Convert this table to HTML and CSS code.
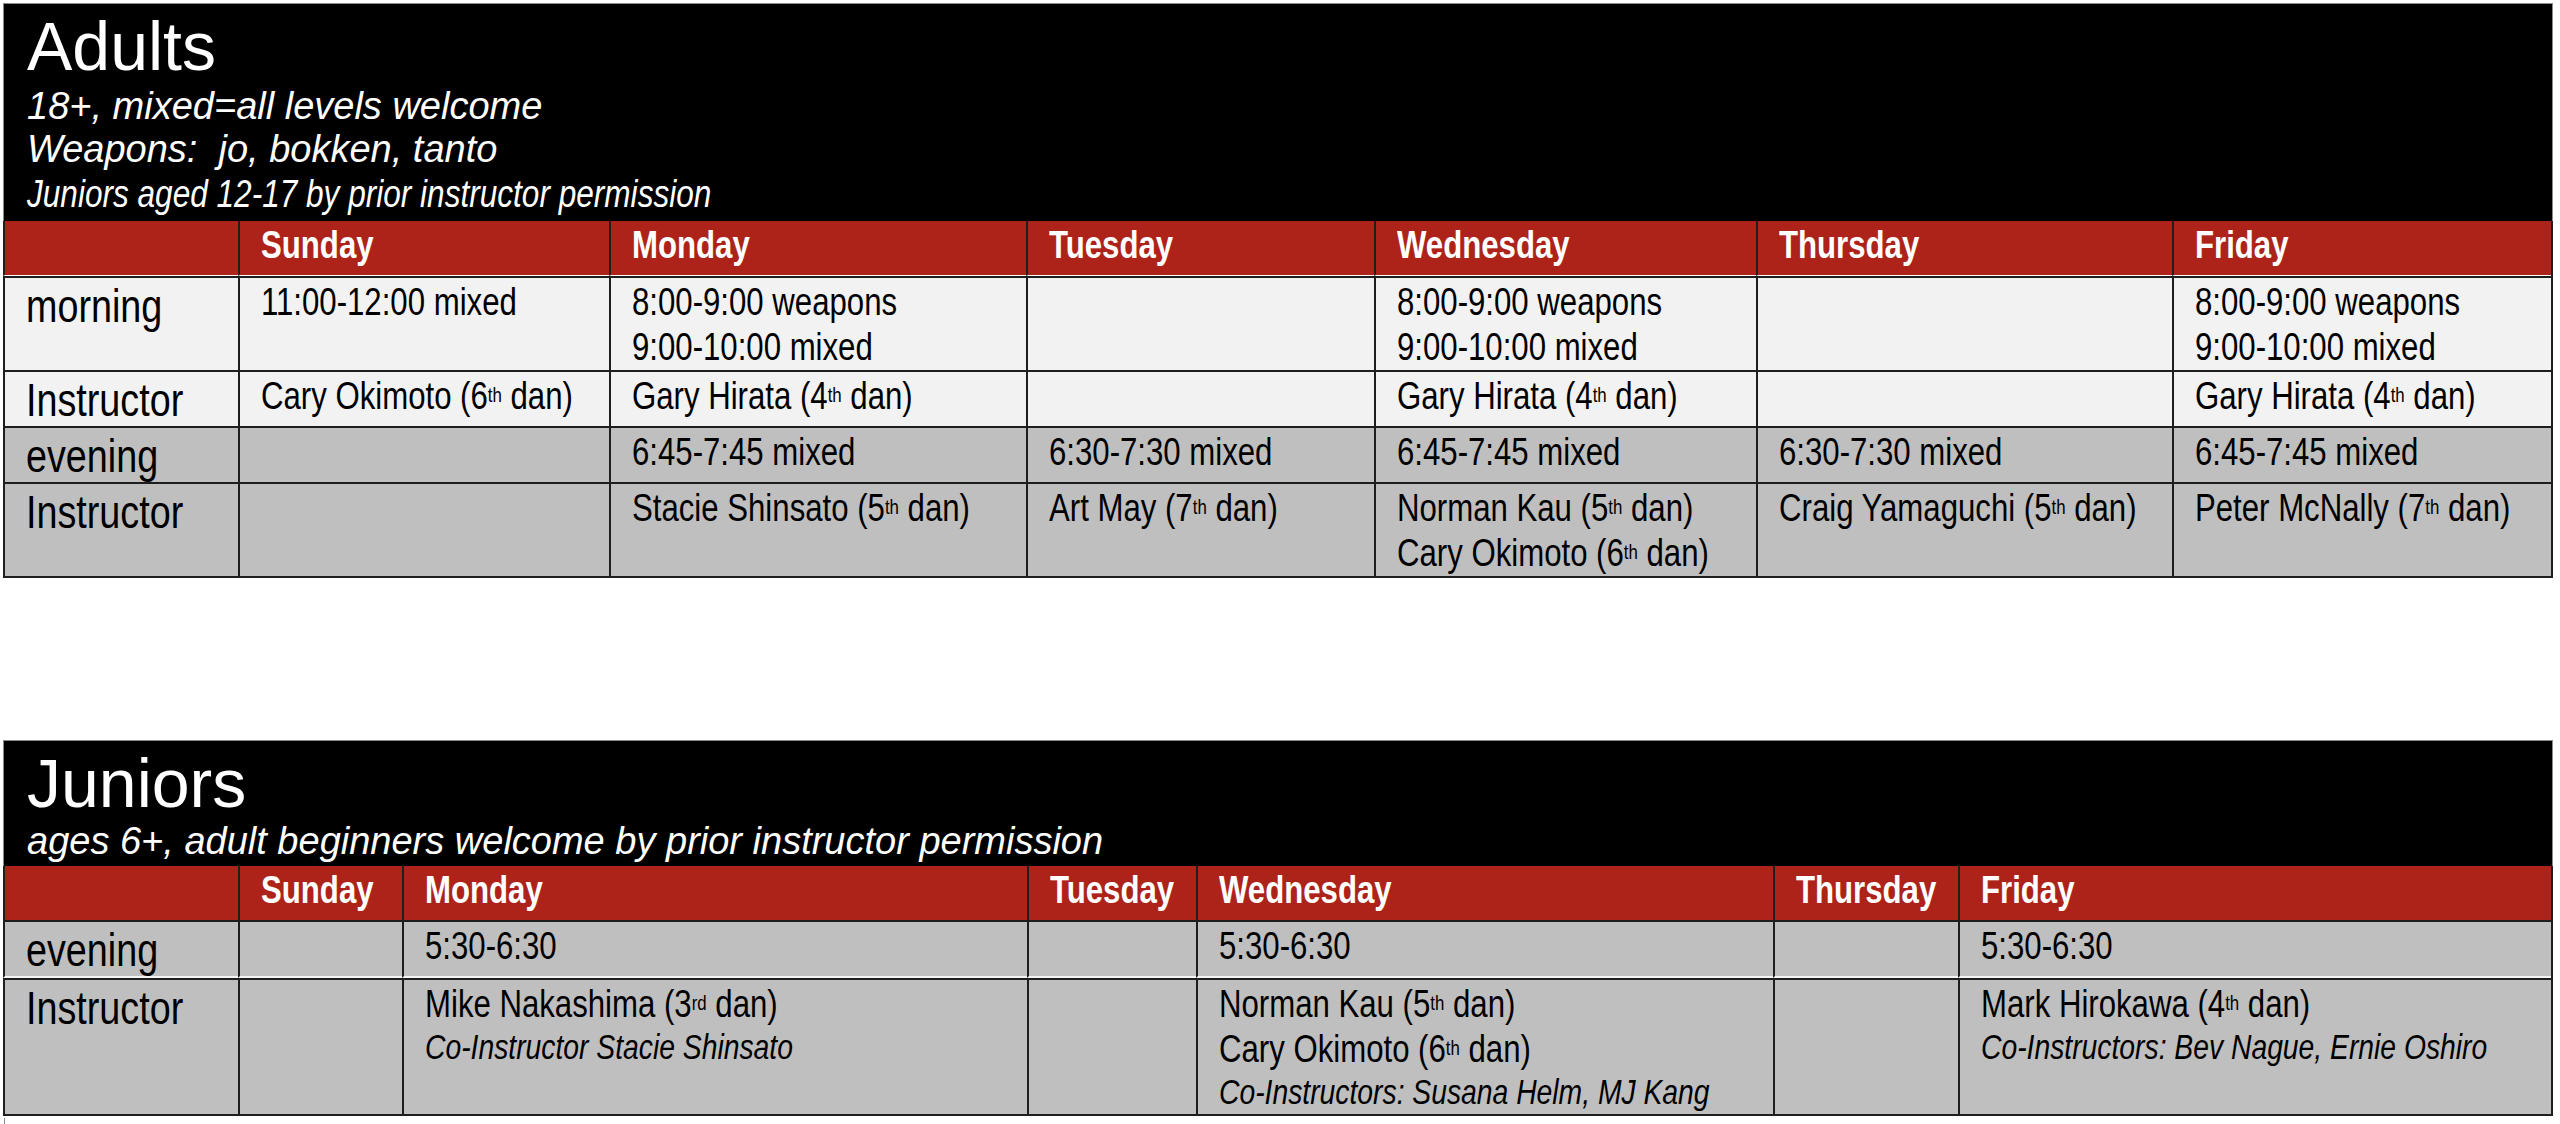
FILE: index.html
```html
<!DOCTYPE html>
<html lang="en">
<head>
<meta charset="utf-8">
<title>Class Schedule</title>
<link rel="stylesheet" href="styles.css">
</head>
<body>
<div class="page">

  <section class="sched adults">
    <header class="banner">
      <h1 class="title">Adults</h1>
      <p class="sub">18+, mixed=all levels welcome</p>
      <p class="sub">Weapons:&nbsp; jo, bokken, tanto</p>
      <p class="sub narrow"><span class="t">Juniors aged 12-17 by prior instructor permission</span></p>
    </header>
    <div class="grid cols-adults">
      <div class="row head">
        <div class="cell"></div>
        <div class="cell"><span class="t">Sunday</span></div>
        <div class="cell"><span class="t">Monday</span></div>
        <div class="cell"><span class="t">Tuesday</span></div>
        <div class="cell"><span class="t">Wednesday</span></div>
        <div class="cell"><span class="t">Thursday</span></div>
        <div class="cell"><span class="t">Friday</span></div>
      </div>
      <div class="row light">
        <div class="cell label"><span class="t">morning</span></div>
        <div class="cell"><span class="t">11:00-12:00 mixed</span></div>
        <div class="cell"><span class="t">8:00-9:00 weapons<br>9:00-10:00 mixed</span></div>
        <div class="cell"></div>
        <div class="cell"><span class="t">8:00-9:00 weapons<br>9:00-10:00 mixed</span></div>
        <div class="cell"></div>
        <div class="cell"><span class="t">8:00-9:00 weapons<br>9:00-10:00 mixed</span></div>
      </div>
      <div class="row light">
        <div class="cell label"><span class="t">Instructor</span></div>
        <div class="cell"><span class="t">Cary Okimoto (6<sup>th</sup> dan)</span></div>
        <div class="cell"><span class="t">Gary Hirata (4<sup>th</sup> dan)</span></div>
        <div class="cell"></div>
        <div class="cell"><span class="t">Gary Hirata (4<sup>th</sup> dan)</span></div>
        <div class="cell"></div>
        <div class="cell"><span class="t">Gary Hirata (4<sup>th</sup> dan)</span></div>
      </div>
      <div class="row dark">
        <div class="cell label"><span class="t">evening</span></div>
        <div class="cell"></div>
        <div class="cell"><span class="t">6:45-7:45 mixed</span></div>
        <div class="cell"><span class="t">6:30-7:30 mixed</span></div>
        <div class="cell"><span class="t">6:45-7:45 mixed</span></div>
        <div class="cell"><span class="t">6:30-7:30 mixed</span></div>
        <div class="cell"><span class="t">6:45-7:45 mixed</span></div>
      </div>
      <div class="row dark">
        <div class="cell label"><span class="t">Instructor</span></div>
        <div class="cell"></div>
        <div class="cell"><span class="t">Stacie Shinsato (5<sup>th</sup> dan)</span></div>
        <div class="cell"><span class="t">Art May (7<sup>th</sup> dan)</span></div>
        <div class="cell"><span class="t">Norman Kau (5<sup>th</sup> dan)<br>Cary Okimoto (6<sup>th</sup> dan)</span></div>
        <div class="cell"><span class="t">Craig Yamaguchi (5<sup>th</sup> dan)</span></div>
        <div class="cell"><span class="t">Peter McNally (7<sup>th</sup> dan)</span></div>
      </div>
    </div>
  </section>

  <section class="sched juniors">
    <header class="banner">
      <h1 class="title">Juniors</h1>
      <p class="sub">ages 6+, adult beginners welcome by prior instructor permission</p>
    </header>
    <div class="grid cols-juniors">
      <div class="row head">
        <div class="cell"></div>
        <div class="cell"><span class="t">Sunday</span></div>
        <div class="cell"><span class="t">Monday</span></div>
        <div class="cell"><span class="t">Tuesday</span></div>
        <div class="cell"><span class="t">Wednesday</span></div>
        <div class="cell"><span class="t">Thursday</span></div>
        <div class="cell"><span class="t">Friday</span></div>
      </div>
      <div class="row dark split">
        <div class="cell label"><span class="t">evening</span></div>
        <div class="cell"></div>
        <div class="cell"><span class="t">5:30-6:30</span></div>
        <div class="cell"></div>
        <div class="cell"><span class="t">5:30-6:30</span></div>
        <div class="cell"></div>
        <div class="cell"><span class="t">5:30-6:30</span></div>
      </div>
      <div class="row dark">
        <div class="cell label"><span class="t">Instructor</span></div>
        <div class="cell"></div>
        <div class="cell"><span class="t">Mike Nakashima (3<sup>rd</sup> dan)<span class="co">Co-Instructor Stacie Shinsato</span></span></div>
        <div class="cell"></div>
        <div class="cell"><span class="t">Norman Kau (5<sup>th</sup> dan)<br>Cary Okimoto (6<sup>th</sup> dan)<span class="co">Co-Instructors: Susana Helm, MJ Kang</span></span></div>
        <div class="cell"></div>
        <div class="cell"><span class="t">Mark Hirokawa (4<sup>th</sup> dan)<span class="co">Co-Instructors: Bev Nague, Ernie Oshiro</span></span></div>
      </div>
    </div>
  </section>

  <div class="next"></div>
</div>
</body>
</html>
```

FILE: styles.css
```css
html, body {
  margin: 0;
  padding: 0;
  background: #ffffff;
}

body {
  font-family: "Liberation Sans", Arial, sans-serif;
  color: #000;
}

.page {
  padding: 3px 0 0 3px;
  width: 2550px;
}

.sched {
  width: 2550px;
}

.juniors {
  margin-top: 162px;
}

.banner {
  box-sizing: border-box;
  width: 2550px;
  background: #000;
  color: #fff;
  border: 1px solid #8a8a8a;
  border-bottom: none;
  padding: 8px 0 5px 23px;
}

.juniors .banner {
  padding-bottom: 3px;
}

.title {
  margin: 0 0 5px 0;
  font-weight: normal;
  font-size: 68px;
  line-height: 68px;
}

.juniors .title {
  margin-bottom: 3px;
}

.sub {
  margin: 0;
  font-style: italic;
  font-size: 38px;
  line-height: 43px;
}

.sub.narrow {
  font-size: 38.5px;
  line-height: 45px;
  white-space: nowrap;
}

/* condensed (Arial Narrow-like) text */
.t {
  display: inline-block;
  transform: scaleX(0.82);
  transform-origin: 0 0;
  white-space: nowrap;
}

.grid {
  display: grid;
  border-right: 2px solid #1e1e1e;
  border-bottom: 2px solid #1e1e1e;
  font-size: 38px;
  line-height: 45px;
}

.cols-adults {
  grid-template-columns: 235px 371px 417px 348px 382px 416px 379px;
}

.cols-juniors {
  grid-template-columns: 235px 164px 625px 169px 577px 185px 593px;
}

.row {
  display: contents;
}

.cell {
  box-sizing: border-box;
  border-left: 2px solid #1e1e1e;
  border-top: 2px solid #1e1e1e;
  padding: 2px 0 0 21px;
  white-space: nowrap;
  min-height: 56px;
  overflow: hidden;
}

.head .cell {
  background: #ad2319;
  color: #fff;
  font-weight: bold;
  border-top: none;
  min-height: 0;
  height: 54px;
  padding-top: 0;
  line-height: 48px;
}

.adults .head .cell {
  height: 55px;
  border-bottom: 1px solid #ffffff;
}

.light .cell {
  background: #f2f2f2;
}

.dark .cell {
  background: #bfbfbf;
}

.split .cell {
  border-bottom: 2px solid #f4f4f4;
}

.label {
  font-size: 46px;
  line-height: 52px;
}

sup {
  font-size: 0.54em;
  line-height: 0;
  vertical-align: 0.36em;
}

.co {
  display: block;
  font-style: italic;
  font-size: 34.5px;
  line-height: 40px;
}

.next {
  margin-top: 2px;
  width: 0;
  height: 8px;
  border-left: 1px solid #8a8a8a;
  margin-left: 1px;
}
```
